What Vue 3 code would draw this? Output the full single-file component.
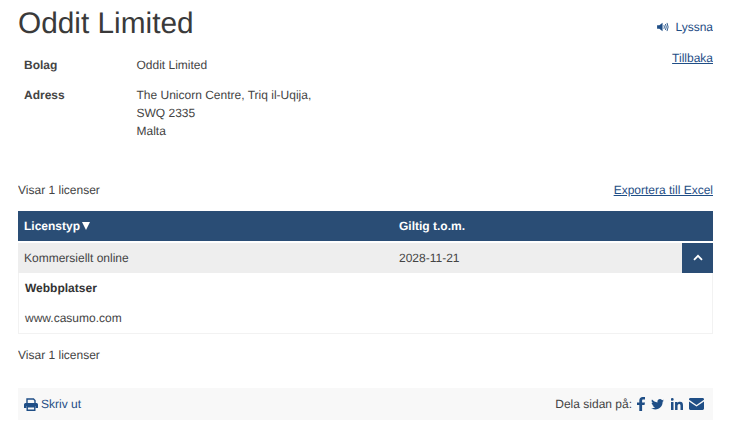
<script setup>
const info = [
  { label: 'Bolag', lines: ['Oddit Limited'] },
  { label: 'Adress', lines: ['The Unicorn Centre, Triq il-Uqija,', 'SWQ 2335', 'Malta'] },
]
</script>

<template>
  <div class="page">
    <div class="top">
      <div class="main">
        <h1>Oddit Limited</h1>
        <div v-for="row in info" :key="row.label" class="info">
          <div class="label">{{ row.label }}</div>
          <div><div v-for="l in row.lines" :key="l">{{ l }}</div></div>
        </div>
      </div>
      <div class="side">
        <a class="listen">
          <svg width="12" height="10" viewBox="0 0 13 11"><path d="M0 3.500h2.500L6 .8v9.400L2.500 7.500H0z" fill="#1f4e86"/><path d="M7.500 3.500q1 2 0 4M9.200 2.200q1.800 3.300 0 6.600M10.900 1q2.500 4.500 0 9" fill="none" stroke="#1f4e86" stroke-width="1"/></svg>
          <span>Lyssna</span>
        </a>
        <a class="back">Tillbaka</a>
      </div>
    </div>

    <div class="count-row">
      <span>Visar 1 licenser</span>
      <a class="link">Exportera till Excel</a>
    </div>

    <div class="table">
      <div class="thead">
        <div class="c1">Licenstyp<span class="tri"></span></div>
        <div>Giltig t.o.m.</div>
      </div>
      <div class="tr">
        <div class="c1">Kommersiellt online</div>
        <div>2028-11-21</div>
        <button class="toggle" aria-label="Stäng">
          <svg width="10" height="7" viewBox="0 0 10 7"><path d="M1 5.800l4-4 4 4" fill="none" stroke="#fff" stroke-width="1.800"/></svg>
        </button>
      </div>
      <div class="detail">
        <div class="dh">Webbplatser</div>
        <div class="dv">www.casumo.com</div>
      </div>
    </div>

    <div class="count2">Visar 1 licenser</div>

    <div class="foot">
      <a class="print">
        <svg width="14" height="13" viewBox="0 0 14 13"><path d="M3 6V1h6.500L11 2.500V6" fill="none" stroke="#1f4e86" stroke-width="1.400"/><path d="M1.500 5h11A1.500 1.500 0 0114 6.500V10h-2.500V8h-9v2H0V6.500A1.500 1.500 0 011.500 5z" fill="#1f4e86"/><path d="M3.200 8.700h7.600v3.600H3.200z" fill="none" stroke="#1f4e86" stroke-width="1.400"/></svg>
        <span>Skriv ut</span>
      </a>
      <div class="share">
        <span class="share-label">Dela sidan på:</span>
        <svg width="8" height="14" viewBox="0 0 8 14"><path d="M2.300 14V8H0V5.400h2.300V3.500C2.300 1.200 3.700 0 5.700 0H8v2.500H6.400c-1 0-1.300.5-1.300 1.300v1.600H8L7.500 8H5.100v6z" fill="#1f4e86"/></svg>
        <svg width="13" height="11" viewBox="0 0 14 12"><path d="M14 1.600c-.5.200-1 .4-1.600.5.600-.4 1-.9 1.200-1.600-.5.300-1.100.6-1.800.7C11.300.5 10.600.1 9.700.1 8.200.1 6.900 1.400 6.900 3c0 .2 0 .4.100.7C4.600 3.500 2.500 2.400 1 .6.800 1 .6 1.500.6 2c0 1 .5 1.900 1.300 2.400-.5 0-.9-.1-1.300-.4 0 1.400 1 2.600 2.300 2.900-.2.100-.5.100-.8.100-.2 0-.4 0-.5-.1.400 1.200 1.400 2 2.700 2C3.300 9.700 2 10.200.7 10.200H0c1.300.8 2.800 1.300 4.400 1.300 5.300 0 8.200-4.400 8.200-8.200V3c.6-.4 1-.9 1.400-1.400z" fill="#1f4e86"/></svg>
        <svg width="12" height="12" viewBox="0 0 13 13"><path d="M0 4.300h2.700V13H0zM1.350 0a1.550 1.550 0 110 3.100 1.550 1.550 0 010-3.100zM4.400 4.300H7v1.200c.4-.8 1.400-1.400 2.800-1.400 2.700 0 3.200 1.800 3.200 4.100V13h-2.700V8.700c0-1 0-2.300-1.400-2.300S7.100 7.500 7.100 8.600V13H4.400z" fill="#1f4e86"/></svg>
        <svg width="15" height="12" viewBox="0 0 15 12"><path d="M1.400 0h12.200C14.400 0 15 .6 15 1.400v.4L7.500 7 0 1.800v-.4C0 .6.600 0 1.400 0z" fill="#1f4e86"/><path d="M0 3.400l7.500 5 7.500-5v7.200c0 .8-.6 1.400-1.400 1.400H1.400C.6 12 0 11.400 0 10.600z" fill="#1f4e86"/></svg>
      </div>
    </div>
  </div>
</template>

<style>
html, body { margin: 0; background: #fff; }
</style>

<style scoped>
.page {
  width: 695px;
  height: 425px;
  margin-left: 18px;
  overflow: hidden;
  font-family: "Liberation Sans", Arial, sans-serif;
  font-size: 12px;
  line-height: 18px;
  color: #444;
  text-rendering: geometricPrecision;
}
.top { display: flex; justify-content: space-between; }
.main { flex: 1; }
h1 {
  margin: 6px 0 14px;
  font-size: 29.8px;
  line-height: 36px;
  font-weight: 400;
  color: #3a3a3a;
}
.info { display: grid; grid-template-columns: 112.500px 1fr; padding-left: 6px; margin-bottom: 12px; }
.label { font-weight: 700; }
.side { display: flex; flex-direction: column; align-items: flex-end; color: #1f4e86; }
.listen { display: flex; align-items: center; gap: 6px; margin-top: 18px; }
.back { margin-top: 13px; text-decoration: underline; }
.count-row { display: flex; justify-content: space-between; margin-top: 29px; }
.link { color: #1f4e86; text-decoration: underline; }
.table { margin-top: 11.500px; }
.thead, .tr { display: grid; grid-template-columns: 375px 1fr; align-items: center; padding-left: 6px; }
.thead {
  height: 30px;
  background: #2a4d75;
  color: #fff;
  font-weight: 700;
}
.c1 { display: flex; align-items: center; }
.tri {
  width: 0;
  height: 0;
  margin-left: 2px;
  border-left: 4.500px solid transparent;
  border-right: 4.500px solid transparent;
  border-top: 8px solid #fff;
}
.tr { position: relative; margin-top: 2px; height: 30px; background: #eee; }
.toggle {
  position: absolute;
  right: 0;
  top: 0;
  width: 31px;
  height: 30px;
  padding: 0;
  border: 0;
  background: #2a4d75;
  display: flex;
  align-items: center;
  justify-content: center;
}
.detail { border: 1px solid #f2f2f2; border-top: 0; height: 61px; padding-left: 6px; box-sizing: border-box; }
.dh { font-weight: 700; color: #333; padding-top: 6px; }
.dv { margin-top: 12px; }
.count2 { margin-top: 12px; }
.foot {
  margin-top: 24.500px;
  height: 32px;
  background: #f8f8f8;
  display: flex;
  align-items: center;
  justify-content: space-between;
  padding: 0 9px 0 6px;
}
.print { display: flex; align-items: center; gap: 3px; color: #1f4e86; }
.share { display: flex; align-items: center; gap: 6.500px; }
.share-label { margin-right: -2px; }
</style>
